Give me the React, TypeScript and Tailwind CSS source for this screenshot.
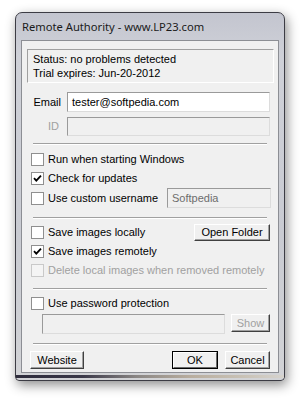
import React from "react";

const ui = { fontFamily: '"Liberation Sans", Arial, sans-serif' };

function Box({ checked, disabled }: { checked?: boolean; disabled?: boolean }) {
  return (
    <span
      className={
        "flex h-[13px] w-[13px] shrink-0 items-center justify-center border " +
        (disabled ? "border-[#c9c9c9] bg-[#f4f4f4]" : "border-[#8f8f8f] bg-white")
      }
    >
      {checked && (
        <svg width="9" height="9" viewBox="0 0 9 9">
          <path d="M1 4.2 L3.3 6.6 L8 1.6" stroke="#000" strokeWidth="1.8" fill="none" />
        </svg>
      )}
    </span>
  );
}

function Check({
  label,
  checked,
  disabled,
  className = "",
  children,
}: {
  label: string;
  checked?: boolean;
  disabled?: boolean;
  className?: string;
  children?: React.ReactNode;
}) {
  return (
    <div className={"flex items-center pl-[9px] " + className}>
      <Box checked={checked} disabled={disabled} />
      <span className={"ml-[4px] whitespace-nowrap " + (disabled ? "text-[#a0a0a0]" : "text-black")}>{label}</span>
      {children}
    </div>
  );
}

function Sep({ className = "" }: { className?: string }) {
  return <div className={"ml-[11px] w-[234px] border-t border-b border-t-[#a0a0a0] border-b-white " + className} />;
}

function Field({ value, disabled, className = "" }: { value?: string; disabled?: boolean; className?: string }) {
  return (
    <div
      className={
        "flex items-center border border-t-[#9a9a9a] border-l-[#9a9a9a] border-b-[#dcdcdc] border-r-[#dcdcdc] px-[4px] " +
        (disabled ? "bg-[#f0f0f0] text-[#6d6d6d]" : "bg-white text-black") +
        " " +
        className
      }
    >
      {value}
    </div>
  );
}

function Btn({
  label,
  disabled,
  def,
  className = "",
}: {
  label: string;
  disabled?: boolean;
  def?: boolean;
  className?: string;
}) {
  return (
    <div className={(def ? "border border-black " : "") + "flex shrink-0 " + className}>
      <div
        className={
          "flex flex-1 items-center justify-center border border-t-white border-l-white bg-[#f0f0f0] " +
          (def ? "border-b-[#696969] border-r-[#696969] " : "border-b-[#404040] border-r-[#404040] shadow-[inset_-1px_-1px_0_#a0a0a0] ") +
          (disabled ? "text-[#a0a0a0]" : "text-black")
        }
      >
        {label}
      </div>
    </div>
  );
}

export default function App() {
  return (
    <div className="h-[401px] w-[305px] bg-white pl-[15px] pt-[12px]">
      <div className="flex h-[369px] w-[270px] flex-col rounded-t-[7px] rounded-b-[4px] border border-[#3c3c44] bg-[linear-gradient(180deg,#c3c5cf_0%,#cfd1d8_12%,#c9cbd2_60%,#d2d3d6_100%)] px-[5px] shadow-[2px_4px_12px_rgba(0,0,0,0.45)]">
        <div
          className="flex h-[27px] items-center pl-[1px] pt-[1px] text-[11.2px] text-[#1a1a1a]"
          style={{ fontFamily: '"Noto Sans", "Open Sans", sans-serif' }}
        >
          Remote Authority - www.LP23.com
        </div>
        <div className="flex h-[333px] flex-col border border-[#8c8e94] bg-[#f0f0f0] text-[11px]" style={ui}>
          <div className="ml-[5px] mt-[8px] flex h-[34px] w-[247px] flex-col justify-center border border-t-[#a0a0a0] border-l-[#a0a0a0] border-b-white border-r-white pl-[5px] leading-[14px]">
            <div>Status: no problems detected</div>
            <div>Trial expires: Jun-20-2012</div>
          </div>

          <div className="mt-[9px] flex h-[20px] items-center">
            <span className="w-[39px] text-right">Email</span>
            <Field value="tester@softpedia.com" className="ml-[6px] h-[20px] w-[203px]" />
          </div>
          <div className="mt-[5px] flex h-[19px] items-center">
            <span className="w-[37px] text-right text-[#a0a0a0]">ID</span>
            <Field disabled className="ml-[8px] h-[19px] w-[203px]" />
          </div>

          <Sep className="mt-[7px]" />

          <Check label="Run when starting Windows" className="mt-[5px] h-[19px]" />
          <Check label="Check for updates" checked className="h-[19px]" />
          <Check label="Use custom username" className="h-[20px]">
            <Field value="Softpedia" disabled className="ml-auto mr-[7px] h-[20px] w-[104px]" />
          </Check>

          <Sep className="mt-[9px]" />

          <Check label="Save images locally" className="mt-[4px] h-[19px]">
            <Btn label="Open Folder" className="ml-auto mr-[8px] h-[17px] w-[76px]" />
          </Check>
          <Check label="Save images remotely" checked className="h-[19px]" />
          <Check label="Delete local images when removed remotely" disabled className="h-[19px]" />

          <Sep className="mt-[8px]" />

          <Check label="Use password protection" className="mt-[4px] h-[19px]" />
          <div className="mt-[1px] flex h-[20px] items-start">
            <Field disabled className="ml-[20px] h-[20px] w-[183px]" />
            <Btn label="Show" disabled className="ml-[6px] h-[18px] w-[39px]" />
          </div>

          <Sep className="mt-[9px]" />

          <div className="mt-[6px] flex h-[18px] items-center">
            <Btn label="Website" className="ml-[8px] h-[18px] w-[54px]" />
            <Btn label="OK" def className="ml-[88px] h-[18px] w-[46px]" />
            <Btn label="Cancel" className="ml-[7px] h-[18px] w-[45px]" />
          </div>
        </div>
        <div className="mx-[-5px] mt-[2px] h-[3px] bg-[linear-gradient(90deg,#2e2c3c_0%,#3a3848_25%,#8a8684_45%,#b8ad9e_65%,#c9c2b6_85%,#d6d3ce_100%)]" />
      </div>
    </div>
  );
}
